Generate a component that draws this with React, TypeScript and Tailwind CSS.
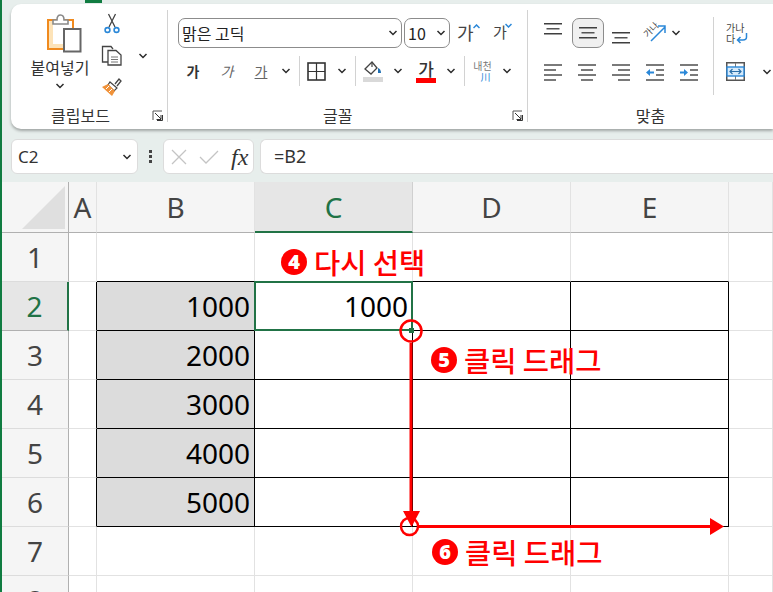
import React from "react";

const ko = { fontFamily: '"Noto Sans CJK KR", "Noto Sans", sans-serif' };
const gridFont = { fontFamily: '"Noto Sans", sans-serif' };

function Chev({ className = "" }: { className?: string }) {
  return (
    <svg width="10" height="6" viewBox="0 0 10 6" className={className}>
      <path d="M1.5 1 L5 4.5 L8.5 1" fill="none" stroke="#2b2b2b" strokeWidth="1.5" />
    </svg>
  );
}

function Sep({ className = "" }: { className?: string }) {
  return <div className={"w-px bg-[#d2d2d2] " + className} />;
}

function Launcher() {
  return (
    <svg width="11" height="11" viewBox="0 0 11 11" className="shrink-0">
      <path d="M1 10 V1 H10" fill="none" stroke="#555" strokeWidth="1" />
      <path d="M3 3 L9 9 M9 5 V9.5 H4.5 M5 10.5 H10.5 V5" fill="none" stroke="#333" strokeWidth="1" />
    </svg>
  );
}

function VAlign({ y, h = 30 }: { y: number; h?: number }) {
  return (
    <svg width="18" height={h} viewBox={`0 0 18 ${h}`}>
      <rect x="0" y={y} width="18" height="1.5" fill="#3f3f3f" />
      <rect x="2.5" y={y + 5} width="13" height="1.5" fill="#555" />
      <rect x="0" y={y + 10} width="18" height="1.5" fill="#3f3f3f" />
    </svg>
  );
}

function Paste() {
  return (
    <svg width="36" height="40" viewBox="0 0 36 40">
      <path d="M2 7 H27 V36 H2 Z" fill="#fff" stroke="#f08a1e" strokeWidth="2" />
      <path d="M3 8 H7 V31 H17 V35 H3 Z" fill="#fde3b8" />
      <path d="M7 7 V11 H22 V7 H18 Q18 2 14.5 2 Q11 2 11 7 Z" fill="#fff" stroke="#8a8a8a" strokeWidth="1.6" />
      <rect x="18" y="16" width="16.5" height="22.5" fill="#fff" stroke="#666" strokeWidth="2" />
    </svg>
  );
}

function Scissors() {
  return (
    <svg width="16" height="21" viewBox="0 0 16 21">
      <path d="M4.5 1 L11 14 M11.5 1 L5 14" stroke="#444" strokeWidth="1.3" fill="none" />
      <circle cx="3.5" cy="17" r="2.4" fill="none" stroke="#2b88d8" strokeWidth="1.6" />
      <circle cx="12.5" cy="17" r="2.4" fill="none" stroke="#2b88d8" strokeWidth="1.6" />
    </svg>
  );
}

function Copy() {
  return (
    <svg width="21" height="21" viewBox="0 0 21 21">
      <path d="M7 17 H1.5 V1.5 H10 L12 4" fill="#fff" stroke="#444" strokeWidth="1.3" />
      <path d="M7 5.5 H15 L20 10 V20 H7 Z" fill="#fff" stroke="#444" strokeWidth="1.3" />
      <path d="M10 12 H17 M10 14.5 H17 M10 17 H17" stroke="#777" strokeWidth="1" />
    </svg>
  );
}

function Brush() {
  return (
    <svg width="21" height="20" viewBox="0 0 21 20">
      <path d="M14 7 L18 2 L20 4 L16 9" fill="#fff" stroke="#444" strokeWidth="1.3" />
      <path d="M9 5 L16 11 L13 14 L7 8 Z" fill="#fff" stroke="#444" strokeWidth="1.2" />
      <path d="M7 7 L14 14 L11 19 L1 10 Z" fill="#f0923a" />
      <path d="M5 12 L8 9 M8 15 L11 12" stroke="#fff" strokeWidth="1" />
    </svg>
  );
}

function Borders() {
  return (
    <svg width="19" height="19" viewBox="0 0 19 19">
      <rect x="1" y="1" width="17" height="17" fill="none" stroke="#333" strokeWidth="1.6" />
      <path d="M9.5 1 V18 M1 9.5 H18" stroke="#333" strokeWidth="1.2" />
    </svg>
  );
}

function Fill() {
  return (
    <svg width="20" height="22" viewBox="0 0 20 22">
      <path d="M9 2 L2 9 L8 14 L14 8 Z" fill="#fff" stroke="#444" strokeWidth="1.3" />
      <path d="M9 2 L9 7" stroke="#444" strokeWidth="1.2" />
      <path d="M15 8 Q18 9 18 13 L15 13 Z" fill="#1f6fb2" />
      <rect x="0" y="17" width="20" height="5" fill="#d9d9d9" />
    </svg>
  );
}

function HAlign({ kind }: { kind: "l" | "c" | "r" }) {
  const x = kind === "l" ? 0 : kind === "c" ? 3 : 6;
  return (
    <svg width="18" height="22" viewBox="0 0 18 22">
      <rect x="0" y="4" width="18" height="2" fill="#7a7a7a" />
      <rect x={x} y="9" width="12" height="2" fill="#7a7a7a" />
      <rect x="0" y="14" width="18" height="2" fill="#7a7a7a" />
      <rect x={x} y="19" width="12" height="2" fill="#7a7a7a" />
    </svg>
  );
}

function Indent({ kind }: { kind: "in" | "out" }) {
  return (
    <svg width="18" height="22" viewBox="0 0 18 22">
      <rect x="0" y="4" width="18" height="2" fill="#7a7a7a" />
      <rect x="10" y="9" width="8" height="2" fill="#7a7a7a" />
      <rect x="10" y="14" width="8" height="2" fill="#7a7a7a" />
      <rect x="0" y="19" width="18" height="2" fill="#7a7a7a" />
      {kind === "in" ? (
        <path d="M0 12.5 L4 9 V11.5 H8 V13.5 H4 V16 Z" fill="#2b88d8" />
      ) : (
        <path d="M8 12.5 L4 9 V11.5 H0 V13.5 H4 V16 Z" fill="#2b88d8" />
      )}
    </svg>
  );
}

function Ribbon() {
  return (
    <div className="ml-[11px] mt-[4px] flex h-[125px] rounded-l-[10px] bg-white shadow-[0_2px_3px_rgba(0,0,0,0.3)]">
      {/* clipboard */}
      <div className="flex flex-col w-[156px] h-[112px] mt-[6px]">
        <div className="flex h-[92px]">
          <div className="w-[90px] flex flex-col items-center pl-[8px]">
            <div className="mt-[3px] h-[40px] ml-[7px]"><Paste /></div>
            <div className="mt-[2px] text-[16px] leading-[24px] text-[#333] whitespace-nowrap" style={ko}>붙여넣기</div>
            <Chev className="mt-[4px]" />
          </div>
          <div className="flex flex-col items-center w-[21px] pt-[3px]">
            <Scissors />
            <div className="mt-[11px]"><Copy /></div>
            <div className="mt-[11px]"><Brush /></div>
          </div>
          <Chev className="ml-[16px] mt-[43px]" />
        </div>
        <div className="flex h-[20px] items-center justify-between pl-[40px] pr-[4px] pt-[6px]">
          <span className="text-[16px] text-[#333] whitespace-nowrap" style={ko}>클립보드</span>
          <Launcher />
        </div>
      </div>
      <Sep className="h-[112px] mt-[6px]" />
      {/* font */}
      <div className="flex flex-col w-[359px] h-[112px] mt-[6px]">
        <div className="flex flex-col h-[92px] pl-[10px] pt-[8px]">
          <div className="flex items-center h-[30px]">
            <div className="w-[224px] h-[30px] flex items-center justify-between border border-[#8c8c8c] rounded-[7px] pl-[3px] pr-[3px] text-[16px] text-[#222]" style={ko}>
              맑은 고딕
              <Chev />
            </div>
            <div className="ml-[2px] w-[46px] h-[30px] flex items-center justify-between border border-[#8c8c8c] rounded-[7px] pl-[3px] pr-[3px] text-[16px] text-[#222]" style={ko}>
              10
              <Chev />
            </div>
            <div className="ml-[7px] w-[23px] h-[30px] leading-[28px] relative text-[18px] text-[#444]" style={ko}>
              가
              <svg width="7" height="5" viewBox="0 0 7 5" className="absolute right-[0px] top-[6px]"><path d="M0.5 4 L3.5 1 L6.5 4" fill="none" stroke="#2b88d8" strokeWidth="1.5" /></svg>
            </div>
            <div className="ml-[13px] w-[19px] h-[30px] leading-[28px] relative text-[15px] text-[#444]" style={ko}>
              가
              <svg width="7" height="5" viewBox="0 0 7 5" className="absolute right-[0px] top-[5px]"><path d="M0.5 1 L3.5 4 L6.5 1" fill="none" stroke="#2b88d8" strokeWidth="1.5" /></svg>
            </div>
          </div>
          <div className="flex items-center h-[30px] mt-[8px]">
            <div className="w-[30px] text-center text-[14px] font-bold text-[#333]" style={ko}>가</div>
            <div className="w-[38px] text-center text-[14px] italic text-[#666]" style={ko}>가</div>
            <div className="w-[30px] text-center text-[14px] underline text-[#666]" style={ko}>가</div>
            <div className="w-[20px] flex justify-center"><Chev /></div>
            <Sep className="h-[30px] ml-[3px]" />
            <div className="w-[29px] pl-[7px]"><Borders /></div>
            <div className="w-[26px] flex justify-center"><Chev /></div>
            <Sep className="h-[30px]" />
            <div className="w-[34px] flex justify-center"><Fill /></div>
            <div className="w-[16px] flex justify-center"><Chev /></div>
            <div className="w-[40px] flex justify-center">
              <div className="flex flex-col items-center w-[20px]">
                <span className="text-[17px] leading-[17px] font-medium text-[#333]" style={ko}>가</span>
                <div className="mt-[1px] w-[20px] h-[5px] bg-[#ff0000]" />
              </div>
            </div>
            <div className="w-[10px] flex justify-center"><Chev /></div>
            <Sep className="h-[30px] ml-[8px]" />
            <div className="w-[35px] flex flex-col items-center">
              <span className="text-[10px] leading-[11px] text-[#777]" style={ko}>내천</span>
              <span className="text-[10px] leading-[11px] text-[#2b88d8] pl-[6px]" style={ko}>川</span>
            </div>
            <div className="w-[14px] flex justify-center"><Chev /></div>
          </div>
        </div>
        <div className="flex h-[20px] items-center pl-[155px] pr-[4px] pt-[6px] justify-between">
          <span className="text-[16px] text-[#333]" style={ko}>글꼴</span>
          <Launcher />
        </div>
      </div>
      <Sep className="h-[112px] mt-[6px]" />
      {/* alignment */}
      <div className="flex flex-col flex-1 h-[112px] mt-[6px] min-w-0">
        <div className="flex h-[92px]">
          <div className="w-[185px] pl-[16px] pt-[8px]">
            <div className="flex items-center h-[30px]">
              <VAlign y={5} />
              <div className="ml-[10px] w-[32px] h-[30px] flex items-center justify-center border border-[#8c8c8c] rounded-[7px] bg-[#f0f0f0]"><VAlign y={8} h={28} /></div>
              <div className="ml-[8px]"><VAlign y={14} /></div>
              <div className="ml-[15px] w-[21px] relative h-[20px]">
                <span className="absolute left-[-2px] top-[2px] text-[9px] leading-[10px] -rotate-45 text-[#444] whitespace-nowrap" style={ko}>가나</span>
                <svg width="21" height="20" viewBox="0 0 21 20" className="absolute left-0 top-0"><path d="M6 18 L20 4 M13 3 H20 V10" fill="none" stroke="#2b88d8" strokeWidth="1.5" /></svg>
              </div>
              <Chev className="ml-[5px]" />
            </div>
            <div className="flex items-center gap-[16px] h-[30px] mt-[8px]">
              <HAlign kind="l" />
              <HAlign kind="c" />
              <HAlign kind="r" />
              <Indent kind="in" />
              <Indent kind="out" />
            </div>
          </div>
          <Sep className="h-[78px] mt-[7px]" />
          <div className="pl-[12px] pt-[12px]">
            <div className="relative w-[24px] h-[22px]">
              <div className="text-[10px] leading-[11px] text-[#444] whitespace-nowrap" style={ko}>가나<br />다</div>
              <svg width="12" height="12" viewBox="0 0 12 12" className="absolute left-[10px] top-[10px]"><path d="M10.5 1 V5 Q10.5 8 7 8 H1.5 M4.5 5 L1.5 8 L4.5 11" fill="none" stroke="#2b88d8" strokeWidth="1.5" /></svg>
            </div>
            <div className="flex items-center mt-[18px]">
              <svg width="19" height="19" viewBox="0 0 19 19">
                <rect x="0.75" y="0.75" width="17.5" height="17.5" fill="#fff" stroke="#555" strokeWidth="1.5" />
                <path d="M9.5 1 V5 M9.5 14 V18" stroke="#777" strokeWidth="1" />
                <rect x="1" y="5" width="17" height="9" fill="#d6eafa" stroke="#2b88d8" strokeWidth="1.4" />
                <path d="M4 9.5 H15 M6.5 7 L4 9.5 L6.5 12 M12.5 7 L15 9.5 L12.5 12" fill="none" stroke="#2b6ea8" strokeWidth="1.2" />
              </svg>
              <Chev className="ml-[17px]" />
            </div>
          </div>
        </div>
        <div className="flex h-[20px] items-center justify-center pt-[6px]">
          <span className="text-[16px] text-[#333]" style={ko}>맞춤</span>
        </div>
      </div>
    </div>
  );
}

function FormulaBar() {
  return (
    <div className="flex items-center h-[35px] mt-[10px] ml-[11px]">
      <div className="w-[127px] h-[35px] flex items-center justify-between bg-white border border-[#dcdcdc] rounded-[6px] pl-[6px] pr-[5px] pt-[1px] text-[17px] text-[#333]" style={gridFont}>
        C2
        <Chev />
      </div>
      <div className="w-[25px] flex flex-col items-center gap-[2px]">
        <div className="w-[3px] h-[3px] bg-[#444]" />
        <div className="w-[3px] h-[3px] bg-[#444]" />
        <div className="w-[3px] h-[3px] bg-[#444]" />
      </div>
      <div className="w-[91px] h-[35px] flex items-center bg-white border border-[#dcdcdc] rounded-[6px] pl-[7px]">
        <svg width="16" height="16" viewBox="0 0 16 16"><path d="M1 1 L15 15 M15 1 L1 15" stroke="#c4c4c4" strokeWidth="1.3" /></svg>
        <svg width="20" height="14" viewBox="0 0 20 14" className="ml-[12px]"><path d="M1 7 L7 13 L19 1" fill="none" stroke="#c4c4c4" strokeWidth="1.3" /></svg>
        <span className="ml-[12px] text-[24px] italic leading-none text-[#333]" style={{ fontFamily: '"Liberation Serif", serif' }}>fx</span>
      </div>
      <div className="ml-[6px] flex-1 h-[35px] flex items-center bg-white border-y border-l border-[#dcdcdc] rounded-l-[6px] pl-[13px] text-[18px] text-[#333]" style={gridFont}>
        =B2
      </div>
    </div>
  );
}

function Corner() {
  return (
    <div className="h-[51px] bg-[#f5f5f5] border-r border-b border-r-[#b0b0b0] border-b-[#b0b0b0] flex items-end justify-end pr-[3px] pb-[3px]">
      <svg width="43" height="43" viewBox="0 0 43 43"><path d="M43 0 V43 H0 Z" fill="#dfdfdf" /></svg>
    </div>
  );
}

function ColHead({ label, active = false }: { label: string; active?: boolean }) {
  return (
    <div
      className={
        "h-[51px] flex items-center justify-center border-r text-[28px] " +
        (active
          ? "bg-[#e6e6e6] border-r-[#d0d0d0] border-b-2 border-b-[#217346] text-[#217346]"
          : "bg-[#f5f5f5] border-r-[#e2e2e2] border-b border-b-[#b0b0b0] text-[#444]")
      }
      style={gridFont}
    >
      {label}
    </div>
  );
}

function RowHead({ label, active = false }: { label: number; active?: boolean }) {
  return (
    <div
      className={
        "h-[49px] flex items-center justify-center border-b pl-[2px] text-[28px] " +
        (active
          ? "bg-[#e6e6e6] border-r-2 border-r-[#217346] border-b-[#b0b0b0] text-[#217346]"
          : "bg-[#f5f5f5] border-r border-r-[#b0b0b0] border-b-[#dcdcdc] text-[#444]")
      }
      style={gridFont}
    >
      {label}
    </div>
  );
}

function Cell({ v, r, b, fill = false }: { v?: string; r: boolean; b: boolean; fill?: boolean }) {
  return (
    <div
      className={
        "h-[49px] flex items-center justify-end pr-[4px] border-r border-b text-[28px] text-black " +
        (r ? "border-r-black " : "border-r-[#e2e2e2] ") +
        (b ? "border-b-black " : "border-b-[#e2e2e2] ") +
        (fill ? "bg-[#dcdcdc]" : "bg-white")
      }
      style={gridFont}
    >
      {v}
    </div>
  );
}

function Note({ n, text, className }: { n: string; text: string; className: string }) {
  return (
    <div className={"absolute flex items-center gap-[7px] whitespace-nowrap " + className}>
      <span className="flex w-[26px] h-[26px] items-center justify-center rounded-full bg-[#ff0000] text-white text-[20px] font-black leading-none" style={gridFont}>
        {n}
      </span>
      <span className="text-[28.5px] leading-[34px] font-medium text-[#ff0000]" style={ko}>{text}</span>
    </div>
  );
}

function Sheet() {
  const rows: { n: number; b?: string; c?: string }[] = [
    { n: 1 },
    { n: 2, b: "1000", c: "1000" },
    { n: 3, b: "2000" },
    { n: 4, b: "3000" },
    { n: 5, b: "4000" },
    { n: 6, b: "5000" },
    { n: 7 },
    { n: 8 },
  ];
  return (
    <div className="relative mt-[8px] h-[410px] overflow-hidden">
      <div className="grid grid-cols-[69px_28px_158px_158px_158px_158px_1fr]">
        <Corner />
        <ColHead label="A" />
        <ColHead label="B" />
        <ColHead label="C" active />
        <ColHead label="D" />
        <ColHead label="E" />
        <ColHead label="" />
        {rows.map((row) => {
          const inT = row.n >= 2 && row.n <= 6;
          const botBlack = row.n >= 1 && row.n <= 6;
          return (
            <React.Fragment key={row.n}>
              <RowHead label={row.n} active={row.n === 2} />
              <Cell r={inT} b={false} />
              <Cell r={inT} b={botBlack} v={row.b} fill={inT} />
              <Cell r={inT} b={botBlack} v={row.c} />
              <Cell r={inT} b={botBlack} />
              <Cell r={inT} b={botBlack} />
              <Cell r={false} b={false} />
            </React.Fragment>
          );
        })}
      </div>

      {/* C2 selection */}
      <div className="absolute left-[254px] top-[99px] w-[159px] h-[50px] border-2 border-[#217346]" />

      {/* drag arrows and circles */}
      <svg width="773" height="410" viewBox="0 0 773 410" className="absolute left-0 top-0">
        <rect x="409" y="146" width="5" height="5" fill="#217346" />
        <circle cx="411" cy="149" r="10.5" fill="none" stroke="#ff0000" strokeWidth="2.5" />
        <rect x="409.5" y="161" width="3" height="172" fill="#ff0000" />
        <path d="M403 329 H420 L411.5 345 Z" fill="#ff0000" />
        <circle cx="409.5" cy="344.5" r="8.5" fill="none" stroke="#ff0000" strokeWidth="2.5" />
        <rect x="418" y="343" width="294" height="3" fill="#ff0000" />
        <path d="M710 336 L724 344.5 L710 353 Z" fill="#ff0000" />
      </svg>

      <Note n="4" text="다시 선택" className="left-[281px] top-[63px]" />
      <Note n="5" text="클릭 드래그" className="left-[431px] top-[161px]" />
      <Note n="6" text="클릭 드래그" className="left-[432px] top-[353px]" />
    </div>
  );
}

export default function App() {
  return (
    <div className="relative w-[773px] h-[592px] overflow-hidden bg-[#e7eeec]">
      <div className="pt-[0.01px]">
        <Ribbon />
        <FormulaBar />
        <Sheet />
      </div>
      <div className="absolute left-0 top-0 w-[2px] h-full bg-[#107c41]" />
      <div className="absolute left-[85px] top-0 w-[17px] h-[3px] bg-[#107c41]" />
    </div>
  );
}
